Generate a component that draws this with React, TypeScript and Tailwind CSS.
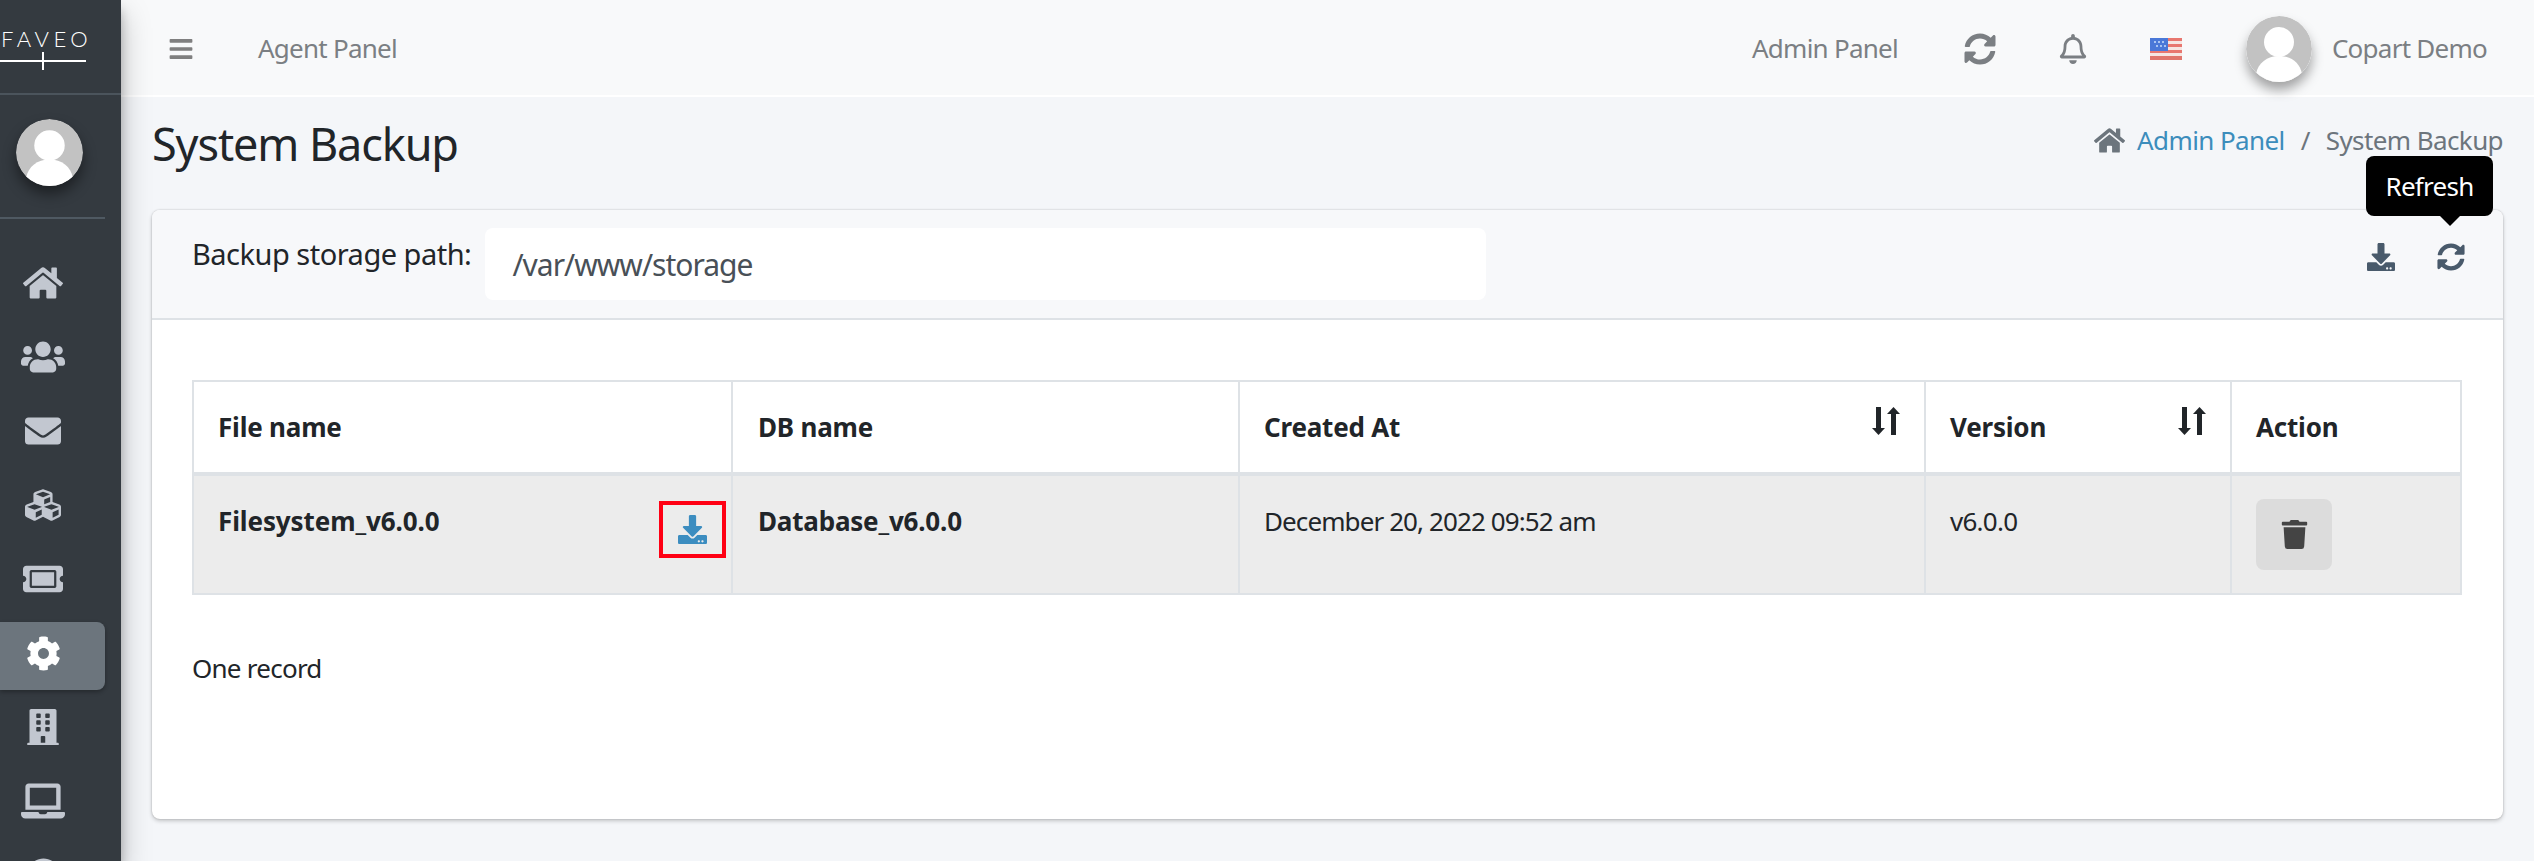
import React from "react";
import {
  FaBars,
  FaBuilding,
  FaCog,
  FaCubes,
  FaEnvelope,
  FaHome,
  FaLaptop,
  FaSyncAlt,
  FaTicketAlt,
  FaTrash,
  FaUsers,
  FaDownload,
  FaRegBell,
  FaQuestionCircle,
} from "react-icons/fa";

const Avatar = ({ className }: { className: string }) => (
  <svg viewBox="0 0 66 66" className={className}>
    <circle cx="33" cy="33" r="33" fill="#c2c2c2" />
    <circle cx="33" cy="26" r="15" fill="#fff" />
    <path d="M10 58c2-11 11-18 23-18s21 7 23 18a33 33 0 0 1-46 0z" fill="#fff" />
  </svg>
);

const SortIcon = () => (
  <svg viewBox="0 0 28 28" className="w-[28px] h-[28px]" fill="#212529">
    <rect x="4" y="0" width="5" height="22" />
    <polygon points="0,21 13,21 6.5,28" />
    <rect x="19" y="6" width="5" height="22" />
    <polygon points="15,7 28,7 21.5,0" />
  </svg>
);

const Flag = () => (
  <svg viewBox="0 0 32 22" className="w-8 h-[22px] block">
    <rect width="32" height="22" fill="#f6e6e2" />
    <rect y="0" width="32" height="3" fill="#e8776f" />
    <rect y="6" width="32" height="3" fill="#e8776f" />
    <rect y="12" width="32" height="3" fill="#e8776f" />
    <rect y="18" width="32" height="4" fill="#e0766c" />
    <rect width="18" height="13" fill="#4a78d8" />
    <g fill="#a9c4f2">
      <rect x="4" y="3" width="2" height="2" />
      <rect x="8" y="3" width="2" height="2" />
      <rect x="12" y="3" width="2" height="2" />
      <rect x="6" y="7" width="2" height="2" />
      <rect x="10" y="7" width="2" height="2" />
      <rect x="14" y="7" width="2" height="2" />
    </g>
  </svg>
);

const navIcons = [
  { icon: FaHome, size: "text-[40px]" },
  { icon: FaUsers, size: "text-[44px]" },
  { icon: FaEnvelope, size: "text-[36px]" },
  { icon: FaCubes, size: "text-[36px]" },
  { icon: FaTicketAlt, size: "text-[40px]" },
  { icon: FaCog, size: "text-[35px]", active: true },
  { icon: FaBuilding, size: "text-[36px]" },
  { icon: FaLaptop, size: "text-[44px]" },
  { icon: FaQuestionCircle, size: "text-[35px]" },
];

export default function App() {
  return (
    <div className="flex h-[861px] w-[2534px] overflow-hidden bg-[#f4f6f9] text-[26px] tracking-[-0.75px] text-[#212529] font-['Noto_Sans',sans-serif]">
      <aside className="w-[121px] shrink-0 bg-[#343a40] shadow-[0_14px_28px_rgba(0,0,0,0.25),0_10px_10px_rgba(0,0,0,0.22)] z-10 overflow-hidden">
        <div className="h-[95px] border-b-2 border-[#4b545c] pt-[27px]">
          <div className="pl-[1px] text-white text-[22px] leading-[24px] tracking-[4.5px] whitespace-nowrap font-['Lato',sans-serif] font-light">
            FAVEO
          </div>
          <div className="relative mt-[9px] w-[86px] h-[2px] bg-white">
            <span className="absolute left-[42px] -top-[8px] w-[2px] h-[18px] bg-white" />
          </div>
        </div>
        <div className="w-[105px] h-[124px] border-b-2 border-[#4f5962] pt-[24px] pl-[16px]">
          <Avatar className="w-[67px] h-[67px] rounded-full shadow-[0_8px_14px_rgba(0,0,0,0.45)]" />
        </div>
        <nav className="w-[105px] pt-[27px] flex flex-col">
          {navIcons.map(({ icon: Icon, size, active }, i) => (
            <div key={i} className="h-[74px] flex items-center">
              <div
                className={`w-full h-[68px] flex items-center justify-center rounded-r-lg ${
                  active
                    ? "bg-[#6c757d] text-white shadow-[0_2px_4px_rgba(0,0,0,0.3)] mt-[6px] pb-[6px]"
                    : "text-[#c2c7d0]"
                } ${size}`}
              >
                <Icon className="mr-[19px]" />
              </div>
            </div>
          ))}
        </nav>
      </aside>

      <div className="flex-1 min-w-0 flex flex-col">
        <header className="h-[97px] shrink-0 bg-[#f8f9fa] border-b-2 border-white pt-[2px] flex items-center text-[#7b7f83]">
          <FaBars className="ml-[47px] text-[26px] text-[#7f7f7f]" />
          <span className="ml-[64px]">Agent Panel</span>
          <div className="ml-auto flex items-center pr-[47px]">
            <span>Admin Panel</span>
            <FaSyncAlt className="ml-[66px] text-[32px]" />
            <FaRegBell className="ml-[62px] text-[30px]" />
            <span className="ml-[62px]"><Flag /></span>
            <Avatar className="ml-[64px] w-[66px] h-[66px] rounded-full shadow-[0_8px_12px_rgba(0,0,0,0.35)]" />
            <span className="ml-[20px]">Copart Demo</span>
          </div>
        </header>

        <main className="flex-1 pl-[31px] pr-[31px]">
          <div className="flex h-[113px] items-start justify-between">
            <h1 className="mt-[18px] text-[45px] tracking-[-1.1px] leading-[58px]">System Backup</h1>
            <div className="mt-[24px] flex items-center tracking-[-0.6px] text-[#6c757d]">
              <FaHome className="text-[31px] mr-[12px]" />
              <span className="text-[#3c8dbc]">Admin Panel</span>
              <span className="mx-[16px]">/</span>
              <span>System Backup</span>
            </div>
          </div>

          <section className="h-[609px] rounded-lg bg-white shadow-[0_0_2px_rgba(0,0,0,0.2),0_2px_4px_rgba(0,0,0,0.2)]">
            <div className="relative h-[110px] rounded-t-lg bg-[#f7f8fa] border-b-2 border-[#dee2e6] flex items-start pl-[40px] pr-[38px] pt-[18px]">
              <span className="text-[29px] tracking-[-0.5px] leading-[40px] mt-[6px]">Backup storage path:</span>
              <div className="ml-[14px] w-[1001px] h-[72px] rounded-lg bg-white flex items-center pl-[27px] text-[#495057] text-[30px] tracking-[-1px]">
                /var/www/storage
              </div>
              <div className="ml-auto mt-[15px] flex items-center text-[#495a6b] text-[28px]">
                <FaDownload />
                <FaSyncAlt className="ml-[42px]" />
              </div>
              <div className="absolute right-[10px] -top-[54px] w-[127px] h-[60px] bg-black text-white rounded-lg flex items-center justify-center">
                Refresh
                <span className="absolute left-[74px] -bottom-[10px] border-x-[10px] border-t-[10px] border-x-transparent border-t-black" />
              </div>
            </div>

            <div className="pt-[60px] px-[40px]">
              <table className="w-[2270px] table-fixed border-collapse">
                <colgroup>
                  <col className="w-[539px]" />
                  <col className="w-[507px]" />
                  <col className="w-[686px]" />
                  <col className="w-[306px]" />
                  <col className="w-[230px]" />
                </colgroup>
                <thead>
                  <tr className="h-[93px] text-left font-bold tracking-[-0.2px]">
                    <th className="border-2 border-b-[4px] border-[#dee2e6] pl-[24px]">File name</th>
                    <th className="border-2 border-b-[4px] border-[#dee2e6] pl-[25px]">DB name</th>
                    <th className="relative border-2 border-b-[4px] border-[#dee2e6] pl-[24px]">
                      Created At
                      <span className="absolute right-[24px] top-[25px]"><SortIcon /></span>
                    </th>
                    <th className="relative border-2 border-b-[4px] border-[#dee2e6] pl-[24px]">
                      Version
                      <span className="absolute right-[24px] top-[25px]"><SortIcon /></span>
                    </th>
                    <th className="border-2 border-b-[4px] border-[#dee2e6] pl-[24px]">Action</th>
                  </tr>
                </thead>
                <tbody>
                  <tr className="h-[120px] bg-[#ececec] align-top">
                    <td className="border-2 border-[#dee2e6] pl-[24px] pt-[26px] font-bold tracking-[-0.1px]">
                      <div className="flex justify-between">
                        <span>Filesystem_v6.0.0</span>
                        <span className="mr-[5px] -mt-[1px] w-[67px] h-[57px] border-[4px] border-[#ff0014] flex items-center justify-center text-[#3c8dc0] text-[29px]">
                          <FaDownload />
                        </span>
                      </div>
                    </td>
                    <td className="border-2 border-[#dee2e6] pl-[25px] pt-[26px] font-bold tracking-[-0.2px]">Database_v6.0.0</td>
                    <td className="border-2 border-[#dee2e6] pl-[24px] pt-[26px] tracking-[-0.9px]">December 20, 2022 09:52 am</td>
                    <td className="border-2 border-[#dee2e6] pl-[24px] pt-[26px]">v6.0.0</td>
                    <td className="border-2 border-[#dee2e6] pl-[24px] pt-[23px]">
                      <button className="w-[76px] h-[71px] rounded-lg bg-[#dcdcdc] flex items-center justify-center text-[#444] text-[29px]">
                        <FaTrash />
                      </button>
                    </td>
                  </tr>
                </tbody>
              </table>
              <p className="mt-[54px]">One record</p>
            </div>
          </section>
        </main>
      </div>
    </div>
  );
}
